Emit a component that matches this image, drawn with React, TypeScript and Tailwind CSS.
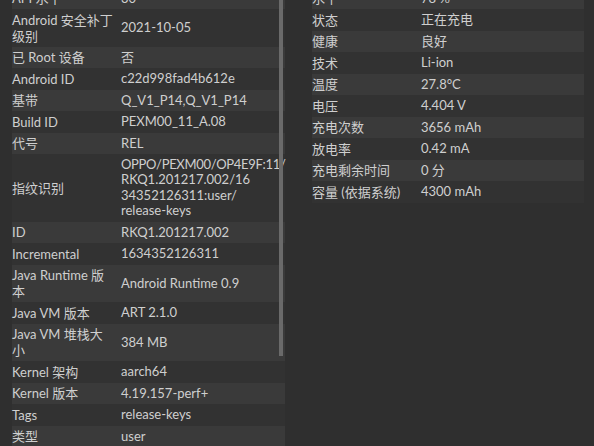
import React from 'react';

type Row = { label: React.ReactNode; value: React.ReactNode };

const deviceRows: Row[] = [
  { label: 'API 水平', value: '30' },
  { label: <>Android 安全补丁<br />级别</>, value: '2021-10-05' },
  { label: '已 Root 设备', value: '否' },
  { label: 'Android ID', value: 'c22d998fad4b612e' },
  { label: '基带', value: 'Q_V1_P14,Q_V1_P14' },
  { label: 'Build ID', value: 'PEXM00_11_A.08' },
  { label: '代号', value: 'REL' },
  {
    label: '指纹识别',
    value: (
      <>
        <span className="tracking-[-0.3px]">OPPO/PEXM00/OP4E9F:11/</span>
        <br />
        RKQ1.201217.002/16
        <br />
        34352126311:user/
        <br />
        release-keys
      </>
    ),
  },
  { label: 'ID', value: 'RKQ1.201217.002' },
  { label: 'Incremental', value: '1634352126311' },
  { label: <>Java Runtime 版<br />本</>, value: 'Android Runtime 0.9' },
  { label: 'Java VM 版本', value: 'ART 2.1.0' },
  { label: <>Java VM 堆栈大<br />小</>, value: '384 MB' },
  { label: 'Kernel 架构', value: 'aarch64' },
  { label: 'Kernel 版本', value: '4.19.157-perf+' },
  { label: 'Tags', value: 'release-keys' },
  { label: '类型', value: 'user' },
];

const batteryRows: Row[] = [
  { label: '水平', value: '78 %' },
  { label: '状态', value: '正在充电' },
  { label: '健康', value: '良好' },
  { label: '技术', value: 'Li-ion' },
  { label: '温度', value: '27.8°C' },
  { label: '电压', value: '4.404 V' },
  { label: '充电次数', value: '3656 mAh' },
  { label: '放电率', value: '0.42 mA' },
  { label: '充电剩余时间', value: '0 分' },
  { label: '容量 (依据系统)', value: '4300 mAh' },
];

function InfoTable({ rows }: { rows: Row[] }) {
  return (
    <div className="flex flex-col -mt-[12.5px]">
      {rows.map((row, i) => (
        <div
          key={i}
          className={`flex items-center py-[2.75px] ${i % 2 === 0 ? 'bg-[#3a3a3a]' : 'bg-[#323232]'}`}
        >
          <div className="w-[109px] shrink-0 leading-[16px] whitespace-nowrap">{row.label}</div>
          <div className="flex-1 leading-[15.5px] whitespace-nowrap">{row.value}</div>
        </div>
      ))}
    </div>
  );
}

export default function App() {
  return (
    <div
      className="w-[594px] h-[446px] overflow-hidden bg-[#2f2f2f] text-[#cfcfcf] text-[13px] flex"
      style={{ fontFamily: 'Lato, "Noto Sans CJK SC", sans-serif' }}
    >
      <div className="relative ml-[12px] w-[273px] shrink-0">
        <InfoTable rows={deviceRows} />
        {/* scrollbar */}
        <div className="absolute right-[2px] top-0 w-[4px] h-[356px] bg-[#6a6a6a]" />
      </div>
      <div className="ml-[27px] w-[272px] shrink-0 self-start">
        <InfoTable rows={batteryRows} />
      </div>
    </div>
  );
}
